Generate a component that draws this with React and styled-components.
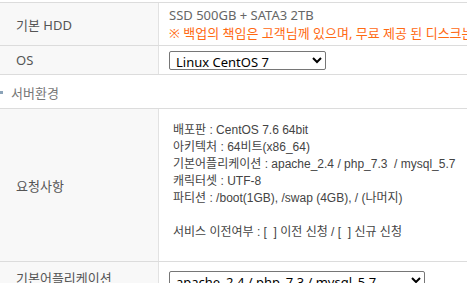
import styled, { createGlobalStyle } from "styled-components";

const GlobalStyle = createGlobalStyle`
  html, body {
    margin: 0;
    padding: 0;
    background: #fff;
    overflow: hidden;
  }
  body {
    font-family: "Noto Sans", "Noto Sans CJK KR", sans-serif;
  }
`;

const Page = styled.div`
  width: 467px;
  height: 283px;
  overflow: hidden;
  padding-top: 2px;
  box-sizing: border-box;
`;

const Table = styled.div`
  border-top: 1px solid #dcdcdc;
`;

const Row = styled.div`
  display: grid;
  grid-template-columns: 159px 1fr;
  border-bottom: 1px solid #dcdcdc;
  min-height: ${(p) => p.h}px;
`;

const Label = styled.div`
  background: #f8f8f8;
  border-right: 1px solid #e2e2e2;
  display: flex;
  align-items: center;
  padding-left: 16px;
  font-size: 13px;
  color: #555;
  white-space: nowrap;
`;

const Cell = styled.div`
  display: flex;
  flex-direction: column;
  justify-content: center;
  padding: ${(p) => p.pad || "0 0 0 10px"};
  font-size: 13px;
  white-space: nowrap;
  overflow: hidden;
`;

const Line = styled.div`
  line-height: 18px;
  color: ${(p) => p.color || "#666"};
`;

const Select = styled.select`
  font-family: "Noto Sans", "Noto Sans CJK KR", sans-serif;
  font-size: 13px;
  color: #000;
  width: ${(p) => p.w}px;
  height: 19px;
  padding: 0 2px;
  border: 1px solid #767676;
  border-radius: 2px;
  background: #fff;
`;

const Section = styled.div`
  height: 33px;
  display: flex;
  align-items: center;
  padding-top: 2px;
  box-sizing: border-box;
  gap: 8px;
  font-size: 13px;
  color: #777;
`;

const Bullet = styled.span`
  width: 3px;
  height: 3px;
  background: #8ba3b8;
`;

const Notes = styled.div`
  padding: 13px 0 20px 14px;
  font-family: "Liberation Sans", "Noto Sans CJK KR", sans-serif;
  font-size: 12px;
  line-height: 17px;
  color: #444;
  white-space: pre;
`;

const notes = [
  "배포판 : CentOS 7.6 64bit",
  "아키텍처 : 64비트(x86_64)",
  "기본어플리케이션 : apache_2.4 / php_7.3  / mysql_5.7",
  "캐릭터셋 : UTF-8",
  "파티션 : /boot(1GB), /swap (4GB), / (나머지)",
  " ",
  "서비스 이전여부 : [  ] 이전 신청 / [  ] 신규 신청",
];

export default function App() {
  return (
    <Page>
      <GlobalStyle />
      <Table>
        <Row h={42}>
          <Label>기본 HDD</Label>
          <Cell>
            <Line>SSD 500GB + SATA3 2TB</Line>
            <Line color="#ff6a13">※ 백업의 책임은 고객님께 있으며, 무료 제공 된 디스크는 백업용으로 사용하실 수 있습니다.</Line>
          </Cell>
        </Row>
        <Row h={28}>
          <Label>OS</Label>
          <Cell>
            <Select w={157} defaultValue="centos7">
              <option value="centos7">Linux CentOS 7</option>
            </Select>
          </Cell>
        </Row>
      </Table>
      <Section>
        <Bullet />
        서버환경
      </Section>
      <Table>
        <Row h={152}>
          <Label>요청사항</Label>
          <Cell pad="0">
            <Notes>
              {notes.map((n, i) => (
                <div key={i}>{n}</div>
              ))}
            </Notes>
          </Cell>
        </Row>
        <Row h={30}>
          <Label>기본어플리케이션</Label>
          <Cell pad="6px 0 0 10px">
            <Select w={256} defaultValue="a">
              <option value="a">apache_2.4 / php_7.3 / mysql_5.7</option>
            </Select>
          </Cell>
        </Row>
      </Table>
    </Page>
  );
}
